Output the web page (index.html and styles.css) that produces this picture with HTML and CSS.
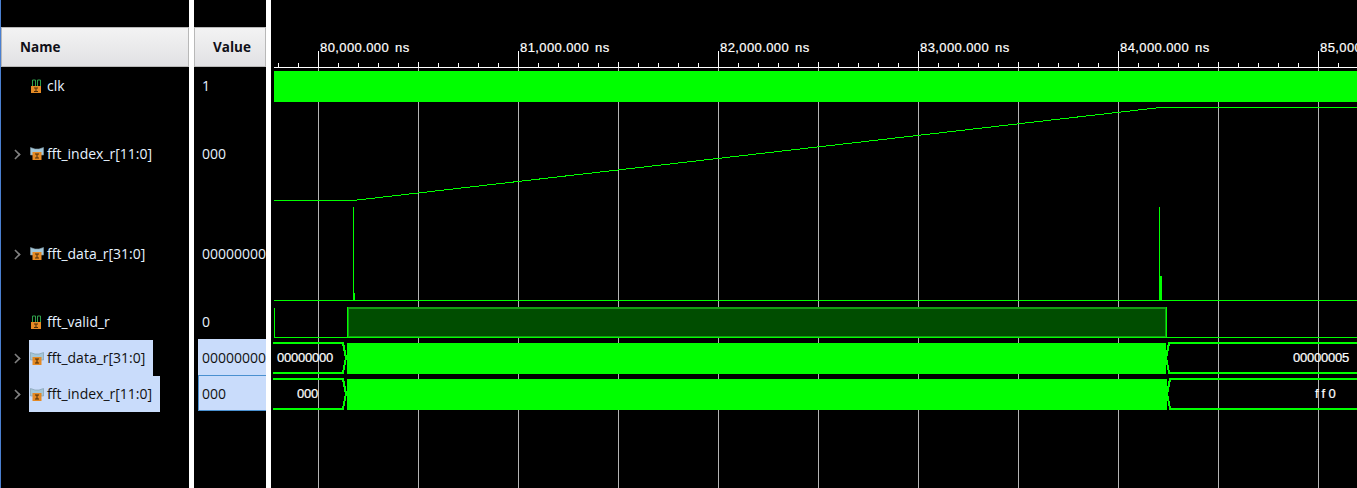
FILE: index.html
```html
<!DOCTYPE html>
<html lang="en">
<head>
    <meta charset="UTF-8">
    <meta name="viewport" content="width=device-width, initial-scale=1.0">
    <title>Waveform</title>
    <link rel="stylesheet" href="styles.css">
</head>
<body>

<svg class="defs" width="0" height="0">
  <symbol id="icon-bit" viewBox="0 0 14 14">
    <path d="M2.5 7V1H5.5V7M7.5 7V1H10.5V7" fill="none" stroke="#2f9e4a" stroke-width="1"/>
    <rect x="1" y="7" width="10" height="7" fill="#e58a24"/>
    <path d="M4 9H8M6 9V12.5M4 12.5H8" fill="none" stroke="#4a2c08" stroke-width="1"/>
  </symbol>
  <symbol id="icon-bus" viewBox="0 0 14 14">
    <path d="M0.5 0.5L5 2H9L13.5 0.5V8H0.5Z" fill="#a3c6d8" stroke="#7d98a8" stroke-width="0.6"/>
    <rect x="2.5" y="5" width="9" height="8" fill="#e58a24"/>
    <path d="M5 7H9M7 7V11M5 11H9" fill="none" stroke="#4a2c08" stroke-width="1"/>
  </symbol>
</svg>

<div class="viewer">
  <!-- signal names -->
  <div class="col col-name">
    <div class="col-head head-name">Name</div>
    <div class="row row-short"><svg class="icon"><use href="#icon-bit"/></svg><span class="sig">clk</span></div>
    <div class="row row-tall"><span class="chev"></span><svg class="icon"><use href="#icon-bus"/></svg><span class="sig">fft_index_r[11:0]</span></div>
    <div class="row row-tall"><span class="chev"></span><svg class="icon"><use href="#icon-bus"/></svg><span class="sig">fft_data_r[31:0]</span></div>
    <div class="row row-short"><svg class="icon"><use href="#icon-bit"/></svg><span class="sig">fft_valid_r</span></div>
    <div class="row row-short"><span class="chev"></span><div class="sel"><svg class="icon"><use href="#icon-bus"/></svg><span class="sig">fft_data_r[31:0]</span></div></div>
    <div class="row row-short"><span class="chev"></span><div class="sel"><svg class="icon"><use href="#icon-bus"/></svg><span class="sig">fft_index_r[11:0]</span></div></div>
  </div>

  <!-- values at cursor -->
  <div class="col col-value">
    <div class="col-head head-value">Value</div>
    <div class="val row-short">1</div>
    <div class="val row-tall">000</div>
    <div class="val row-tall">00000000</div>
    <div class="val row-short">0</div>
    <div class="val row-short val-sel val-first">00000000</div>
    <div class="val row-short val-sel val-focus">000</div>
  </div>

  <!-- waveform canvas -->
  <svg class="wave" viewBox="271 0 1086 488">
    <defs>
      <pattern id="grid" x="318" y="0" width="100" height="488" patternUnits="userSpaceOnUse">
        <rect x="0" y="0" width="1" height="488" fill="#b4b4b4"/>
      </pattern>
      <pattern id="ticks" x="318" y="63" width="20" height="4" patternUnits="userSpaceOnUse">
        <rect x="0" y="0" width="1" height="4" fill="#fff"/>
      </pattern>
    </defs>

    <rect x="274" y="68" width="1083" height="420" fill="url(#grid)"/>

    <!-- ruler -->
    <rect x="274" y="63" width="1083" height="4" fill="url(#ticks)"/>
    <rect x="274" y="67" width="1083" height="1" fill="#fff"/>
    <path class="tick" d="M318 51V67M518 51V67M718 51V67M918 51V67M1118 51V67M1318 51V67M418 62V67M618 62V67M818 62V67M1018 62V67M1218 62V67"/>
    <text class="time" x="320" y="52">80,000.000 ns</text>
    <text class="time" x="520" y="52">81,000.000 ns</text>
    <text class="time" x="720" y="52">82,000.000 ns</text>
    <text class="time" x="920" y="52">83,000.000 ns</text>
    <text class="time" x="1120" y="52">84,000.000 ns</text>
    <text class="time" x="1320" y="52">85,000.000 ns</text>

    <!-- clk -->
    <rect class="on" x="274" y="71" width="1083" height="31"/>

    <!-- fft_index_r -->
    <path class="line" d="M274 200.5H353L1160 107.5H1357"/>

    <!-- fft_data_r -->
    <path class="line" d="M274 300.5H1357M353.5 207V300M1159.5 207V300"/>
    <rect class="on" x="354" y="293" width="1" height="7"/>
    <rect class="on" x="1159" y="276" width="3" height="24"/>

    <!-- fft_valid_r -->
    <rect class="valid-high" x="348" y="308" width="818" height="29"/>
    <path class="line" d="M274.5 337.5V307.5M274 337.5H1357M347.5 337V307M1166.5 337V307"/>

    <!-- fft_data_r bus -->
    <path class="bus" d="M273 343H343L346 358L343 372.5H273"/>
    <path class="on" d="M347 343H1166V374H347Z"/>
    <path class="bus" d="M1357 343H1169L1166 358L1169 372.5H1357"/>
    <text class="bus-val" x="277" y="362">00000000</text>
    <text class="bus-val" x="1293" y="362">00000005</text>

    <!-- fft_index_r bus -->
    <path class="bus" d="M273 379H343L346 394L343 408.5H273"/>
    <path class="on" d="M347 379H1167V410H347Z"/>
    <path class="bus" d="M1357 379H1170L1167 394L1170 408.5H1357"/>
    <text class="bus-val" x="297" y="398">000</text>
    <text class="bus-val bus-hex" x="1315" y="398">ff0</text>
  </svg>
</div>

</body>
</html>
```

FILE: styles.css
```css
/* general */
html, body {
    margin: 0;
    padding: 0;
    height: 100%;
    overflow: hidden;
    background-color: #000;
}

.defs {
    display: block;
    height: 0;
}

.viewer {
    display: flex;
    height: 488px;
    background-color: #fff;
    border-left: 1px solid #4a7fd0;
    font-family: "Open Sans", "Noto Sans", sans-serif;
    font-size: 14px;
}

/* columns */
.col {
    background-color: #000;
    padding-top: 27px;
    box-sizing: border-box;
}

.col-name {
    width: 188px;
    margin-right: 5px;
}

.col-value {
    width: 72px;
    margin-right: 5px;
    overflow: hidden;
}

.col-head {
    height: 40px;
    box-sizing: border-box;
    border: 1px solid #b8b8b8;
    background: linear-gradient(#f3f3f3, #e1e1e4);
    color: #101018;
    font-size: 13.5px;
    font-weight: 700;
    line-height: 38px;
    margin-bottom: 1px;
}

.head-name {
    padding-left: 18px;
}

.head-value {
    padding-left: 18px;
}

/* rows */
.row-short {
    height: 36px;
}

.row-tall {
    height: 100px;
}

.row {
    display: flex;
    align-items: center;
    position: relative;
    padding-left: 28px;
}

.sel {
    display: flex;
    align-items: center;
    box-sizing: border-box;
    height: 36px;
    margin-top: -1px;
    padding-right: 8px;
    background-color: #c9dcfb;
}

.icon {
    width: 14px;
    height: 14px;
    margin: 0 3px 0 1px;
    flex: none;
}

.sel .icon {
    margin-top: 2px;
}

.sig {
    padding-bottom: 1px;
    color: #e6f2ff;
    white-space: nowrap;
}

.sel .sig {
    padding-bottom: 0;
    color: #111;
}

.chev {
    position: absolute;
    left: 10px;
    top: 50%;
    width: 7px;
    height: 7px;
    margin-top: -4.5px;
    border-top: 2px solid #808080;
    border-right: 2px solid #808080;
    transform: rotate(45deg) scale(0.8);
}

/* values */
.val {
    display: flex;
    align-items: center;
    box-sizing: border-box;
    padding: 0 0 1px 8px;
    color: #e6f2ff;
    white-space: nowrap;
}

.val-sel {
    margin-left: 4px;
    padding: 0 0 0 4px;
    background-color: #c9dcfb;
    color: #111;
}

.val-first {
    margin-top: -1px;
}

.val-focus {
    padding-left: 3px;
    border: 1px solid #4a90d0;
    border-right: none;
}

/* waveform */
.wave {
    display: block;
    flex: 1;
    height: 488px;
    background-color: #000;
    shape-rendering: crispEdges;
}

.tick {
    stroke: #fff;
    stroke-width: 1;
    fill: none;
    transform: translateX(0.5px);
}

.time, .bus-val {
    font-family: "Liberation Sans", Arial, sans-serif;
    font-size: 13px;
    fill: #fff;
    stroke: #fff;
    stroke-width: 0.2px;
}

.time {
    letter-spacing: 0.4px;
    word-spacing: 2px;
}

.bus-val {
    letter-spacing: -0.23px;
}

.bus-hex {
    letter-spacing: 3.2px;
}

.on {
    fill: #00ff00;
}

.valid-high {
    fill: #004d00;
    stroke: #149c14;
    stroke-width: 2;
}

.line {
    stroke: #00ff00;
    stroke-width: 1;
    fill: none;
}

.bus {
    stroke: #00ff00;
    stroke-width: 2;
    fill: none;
}
```
